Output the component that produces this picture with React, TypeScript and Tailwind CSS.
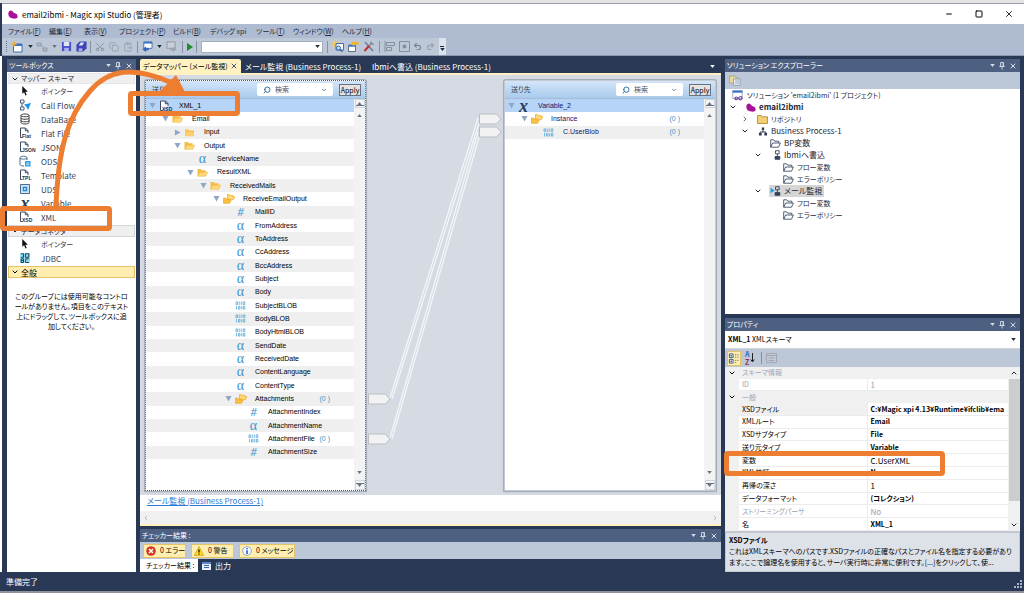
import type { ReactNode } from 'react';
import { Search, X, Minus, Square, ChevronDown, ChevronRight, ChevronUp, ChevronLeft, Scissors, Copy, ClipboardPaste, Undo2, Redo2 } from 'lucide-react';

type NodeIcon = 'xsd' | 'folder' | 'open' | 'multi' | 'alpha' | 'hash' | 'blob' | 'var';

interface MapNode {
    label: string;
    level: number;
    icon: NodeIcon;
    state?: 'open' | 'closed';
    count?: boolean;
}

const sourceNodes: MapNode[] = [
    { label: 'XML_1', level: 0, icon: 'xsd', state: 'open' },
    { label: 'Email', level: 1, icon: 'open', state: 'open' },
    { label: 'Input', level: 2, icon: 'folder', state: 'closed' },
    { label: 'Output', level: 2, icon: 'open', state: 'open' },
    { label: 'ServiceName', level: 3, icon: 'alpha' },
    { label: 'ResultXML', level: 3, icon: 'open', state: 'open' },
    { label: 'ReceivedMails', level: 4, icon: 'open', state: 'open' },
    { label: 'ReceiveEmailOutput', level: 5, icon: 'multi', state: 'open' },
    { label: 'MailID', level: 6, icon: 'hash' },
    { label: 'FromAddress', level: 6, icon: 'alpha' },
    { label: 'ToAddress', level: 6, icon: 'alpha' },
    { label: 'CcAddress', level: 6, icon: 'alpha' },
    { label: 'BccAddress', level: 6, icon: 'alpha' },
    { label: 'Subject', level: 6, icon: 'alpha' },
    { label: 'Body', level: 6, icon: 'alpha' },
    { label: 'SubjectBLOB', level: 6, icon: 'blob' },
    { label: 'BodyBLOB', level: 6, icon: 'blob' },
    { label: 'BodyHtmlBLOB', level: 6, icon: 'blob' },
    { label: 'SendDate', level: 6, icon: 'alpha' },
    { label: 'ReceivedDate', level: 6, icon: 'alpha' },
    { label: 'ContentLanguage', level: 6, icon: 'alpha' },
    { label: 'ContentType', level: 6, icon: 'alpha' },
    { label: 'Attachments', level: 6, icon: 'multi', state: 'open', count: true },
    { label: 'AttachmentIndex', level: 7, icon: 'hash' },
    { label: 'AttachmentName', level: 7, icon: 'alpha' },
    { label: 'AttachmentFile', level: 7, icon: 'blob', count: true },
    { label: 'AttachmentSize', level: 7, icon: 'hash' },
];

const targetNodes: MapNode[] = [
    { label: 'Variable_2', level: 0, icon: 'var', state: 'open' },
    { label: 'Instance', level: 1, icon: 'multi', state: 'open', count: true },
    { label: 'C.UserBlob', level: 2, icon: 'blob', count: true },
];

const menus = [
    { label: 'ファイル', key: 'F', width: 'w-[41px]' },
    { label: '編集', key: 'E', width: 'w-[35px]' },
    { label: '表示', key: 'V', width: 'w-[35px]' },
    { label: 'プロジェクト', key: 'P', width: 'w-[54px]' },
    { label: 'ビルド', key: 'B', width: 'w-[37px]' },
    { label: 'デバッグ xpi', key: '', width: 'w-[46px]' },
    { label: 'ツール', key: 'T', width: 'w-[37px]' },
    { label: 'ウィンドウ', key: 'W', width: 'w-[49px]' },
    { label: 'ヘルプ', key: 'H', width: 'w-[37px]' },
];

const properties = [
    { name: 'スキーマ情報', group: true },
    { name: 'ID', value: '1', muted: true },
    { name: '一般', group: true },
    { name: 'XSDファイル', value: 'C:¥Magic xpi 4.13¥Runtime¥ifclib¥ema', bold: true, selected: true },
    { name: 'XMLルート', value: 'Email', bold: true },
    { name: 'XSDサブタイプ', value: 'File', bold: true },
    { name: '送り元タイプ', value: 'Variable', bold: true },
    { name: '変数', value: 'C.UserXML' },
    { name: 'XML検証', value: 'No', bold: true },
    { name: '再帰の深さ', value: '1' },
    { name: 'データフォーマット', value: '(コレクション)', bold: true },
    { name: 'ストリーミングパーサ', value: 'No', muted: true },
    { name: '名', value: 'XML_1', bold: true },
];

function Caret({ className = 'text-gray-800' }: { className?: string }) {
    return (
        <svg viewBox="0 0 6 4" className={`h-[3px] w-[5px] shrink-0 ${className}`}>
            <path d="M0 0h6L3 4z" fill="currentColor" />
        </svg>
    );
}

function FileIcon({ tag }: { tag: string }) {
    return (
        <svg viewBox="0 0 12 12" className="h-3 w-3 overflow-visible">
            <path d="M1.5 10.5V1h5L9 3.5V6M6.3 1v2.7H9M1.5 10.5h2" fill="#fff" stroke="#3d4b63" strokeWidth="1" />
            <text x="3" y="10.8" fontSize="5" fontWeight="700" fill="#26344d" fontFamily="Liberation Sans">{tag}</text>
        </svg>
    );
}

function OpenFolder() {
    return (
        <svg viewBox="0 0 12 10" className="h-[9px] w-[11px]">
            <path d="M.5 9V1.2h3.6l1 1.3h4.4v2" fill="#f5bd45" />
            <path d="M.6 9.2l2.2-4.6h8.9L9.6 9.2z" fill="#ffd978" stroke="#efb03a" strokeWidth=".6" />
        </svg>
    );
}

function NodeGlyph({ icon }: { icon: NodeIcon }) {
    switch (icon) {
        case 'xsd':
            return <FileIcon tag="XSD" />;
        case 'var':
            return <span className="font-['Liberation_Serif',serif] text-lg leading-3 font-bold italic text-[#2b3b55]">x</span>;
        case 'open':
            return <OpenFolder />;
        case 'folder':
            return (
                <svg viewBox="0 0 12 10" className="h-[9px] w-[11px]">
                    <path d="M1 9.2V1h3.8l1 1.4H11v6.8z" fill="#fbcf69" />
                    <path d="M1 4h10" stroke="#efb544" strokeWidth=".7" />
                </svg>
            );
        case 'multi':
            return (
                <svg viewBox="0 0 12 10" className="h-[10px] w-[12px]">
                    <path d="M4.5 5V.6h2l.7.9h2.6v1.2h2L10.4 5.6H6z" fill="#ffd978" stroke="#f0ae2e" strokeWidth=".8" />
                    <path d="M.5 9.3V4h2l.8 1h3v1.1h1.9L6.6 9.3z" fill="#f9bf45" stroke="#f0a823" strokeWidth=".7" />
                </svg>
            );
        case 'hash':
            return <span className="font-['Open_Sans',sans-serif] text-[11px] leading-3 italic text-[#3d95cc]">#</span>;
        case 'alpha':
            return <span className="font-['Liberation_Serif',serif] text-sm leading-3 text-[#3d95cc]">α</span>;
        case 'blob':
            return (
                <svg viewBox="0 0 12 10" className="h-[9px] w-[11px]">
                    <g fill="none" stroke="#58a7d6" strokeWidth=".9">
                        <path d="M1 1h1.600v3H1zM4.600.6v3.800M6.800.6v3.800M9 1h1.800v3H9zM1.600 5.600v3.800M3.800 6h1.600v3H3.800zM7.400 5.600v3.800M9.200 6h1.600v3H9.200z" />
                    </g>
                </svg>
            );
    }
}

function TreeRow({ node, index, target }: { node: MapNode; index: number; target?: boolean }) {
    const bg = index === 0 ? 'bg-[#b5d4f7]' : index % 2 === 0 ? 'bg-[#efefef]' : 'bg-white';
    return (
        <div className={`relative flex flex-1 items-center ${bg}`} style={{ paddingLeft: Math.round(node.level * 12.7) + 2 }}>
            <span className="flex w-2 shrink-0 justify-center">
                {node.state && (
                    <svg viewBox="0 0 8 8" className={`h-[7px] w-[7px] ${node.state === 'closed' ? '-rotate-90' : ''}`}>
                        <path d="M.5 1h7L4 7.5z" fill="#8ea6c8" />
                    </svg>
                )}
            </span>
            <span className="flex w-[17px] shrink-0 justify-center">
                <NodeGlyph icon={node.icon} />
            </span>
            <span className={`ml-1.5 font-['Liberation_Sans',sans-serif] leading-3 whitespace-nowrap ${target ? 'text-[#14146e]' : 'text-black'}`}>
                {node.label}
            </span>
            {node.count && (
                <span className="absolute right-6 font-['Liberation_Sans',sans-serif] leading-3 text-[#3d95cc]">(0 )</span>
            )}
        </div>
    );
}

function ScrollGutter() {
    return (
        <div className="flex w-[11px] shrink-0 flex-col items-center justify-between bg-[#f3f3f3]">
            <div className="flex flex-col items-center gap-1.5">
                <span className="flex h-[9px] w-[10px] flex-col items-center justify-center border border-gray-300 bg-gray-100">
                    <Caret className="rotate-180 text-gray-500" />
                    <span className="h-px w-2 bg-gray-500" />
                </span>
                <Caret className="rotate-180 text-gray-500" />
            </div>
            <div className="flex flex-col items-center gap-1.5">
                <Caret className="text-gray-500" />
                <span className="flex h-[10px] w-[10px] flex-col items-center justify-center border border-gray-300 bg-gray-100">
                    <span className="h-px w-2 bg-gray-500" />
                    <Caret className="text-gray-500" />
                </span>
            </div>
        </div>
    );
}

function MapperPanel({ title, nodes, target }: { title: string; nodes: MapNode[]; target?: boolean }) {
    return (
        <section
            className={`m-px flex shrink-0 flex-col rounded-t-xs border bg-white shadow ring-1 ring-[#a5adb9] ${target ? 'w-[212px] border-[#c3cad4]' : 'w-[221px] border-dotted border-[#4f5866]'}`}
        >
            <div className="flex h-[18px] shrink-0 items-center gap-1.5 border-b border-[#a9bbd2] bg-linear-to-b from-[#d3e5f8] to-[#a9cbee] pr-1 pl-1.5">
                <span className="flex-1 text-gray-700">{title}</span>
                <label className={`flex h-[13px] items-center gap-1 rounded-xs bg-white px-1.5 ${target ? 'w-[67px]' : 'w-[76px]'}`}>
                    <Search className="h-2 w-2 shrink-0 -scale-x-100 text-[#2f6da8]" strokeWidth={3} />
                    <input type="text" placeholder="検索" aria-label={title + ' 検索'} className="w-full min-w-0 outline-none placeholder:text-gray-600" />
                    <ChevronDown className="h-1.5 w-1.5 shrink-0 text-gray-600" strokeWidth={3} />
                </label>
                <button className="h-3 w-[22px] shrink-0 border border-gray-500 bg-[#e3e3e3] leading-[10px] text-black">Apply</button>
            </div>
            <div className="flex flex-1 bg-white">
                <div className="flex-1">
                    <div className={`flex flex-col ${target ? 'h-[40px]' : 'h-[360px]'}`}>
                        {nodes.map((node, i) => (
                            <TreeRow key={node.label} node={node} index={i} target={target} />
                        ))}
                    </div>
                </div>
                <ScrollGutter />
            </div>
        </section>
    );
}

function PanelHeader({ title }: { title: string }) {
    return (
        <div className="flex h-[13px] shrink-0 items-center justify-between bg-[#4d6082] pr-[3px] pl-0.5 text-white">
            <span className="whitespace-nowrap">{title}</span>
            <div className="flex items-center gap-1 text-[#d5dbe6]">
                <button aria-label="メニュー" className="flex h-2 w-1.5 items-center justify-center"><Caret className="" /></button>
                <button aria-label="固定">
                    <svg viewBox="0 0 6 8" className="h-2 w-1.5">
                        <path d="M1.5.5h3v4h-3zM.3 4.5h5.4M3 4.5v3M4 .5v4" fill="none" stroke="currentColor" strokeWidth=".9" />
                    </svg>
                </button>
                <button aria-label="閉じる"><X className="h-2 w-2" strokeWidth={3} /></button>
            </div>
        </div>
    );
}

function ToolItem({ icon, label, kana }: { icon: ReactNode; label: string; kana?: boolean }) {
    return (
        <button className="flex h-[14px] w-full items-center">
            <span className="ml-3 flex w-3 justify-center">{icon}</span>
            <span className={`ml-[10px] text-gray-700 ${kana ? '' : 'text-[8px]'}`}>{label}</span>
        </button>
    );
}

function Pointer() {
    return (
        <svg viewBox="0 0 8 11" className="h-[10px] w-2">
            <path d="M1 0v8.6l2-1.8 1.5 3.6 1.4-.6-1.5-3.5h2.8z" fill="#111" />
        </svg>
    );
}

function Toolbox() {
    return (
        <aside className="flex w-[129px] shrink-0 flex-col bg-white">
            <PanelHeader title="ツールボックス" />
            <div className="mx-px mt-px flex h-[11px] items-center gap-0.5 border border-gray-200 bg-[#efefef] pl-0.5">
                <ChevronDown className="h-2 w-2" strokeWidth={3} />マッパー スキーマ
            </div>
            <ToolItem icon={<Pointer />} label="ポインター" kana />
            <ToolItem
                icon={
                    <svg viewBox="0 0 12 12" className="h-3 w-3">
                        <path d="M1.500 1h3.500v3H1.500zM3 4v4M1.500 8H5v3H1.500z" fill="none" stroke="#4e5d77" />
                        <path d="M5 5.5L12 4 9 11 7.5 8z" fill="#2196e3" />
                    </svg>
                }
                label="Call Flow"
            />
            <ToolItem
                icon={
                    <svg viewBox="0 0 12 12" className="h-3 w-3">
                        <path d="M2 2.5c0-2 8-2 8 0v7c0 2-8 2-8 0zM2 2.5c0 1.7 8 1.7 8 0M2 5c0 1.7 8 1.7 8 0M2 7.5c0 1.7 8 1.7 8 0" fill="none" stroke="#3c3c3c" />
                    </svg>
                }
                label="DataBase"
            />
            <ToolItem icon={<FileIcon tag="Flat" />} label="Flat File" />
            <ToolItem icon={<FileIcon tag="JSON" />} label="JSON" />
            <ToolItem
                icon={
                    <svg viewBox="0 0 12 12" className="h-3 w-3">
                        <path d="M1 3c0-2.4 7-2.4 7 0v2M1 3v6.500c0 1 2 1.500 4 1.500M1 3c0 1.500 7 1.500 7 0" fill="none" stroke="#4a6a8a" />
                        <path d="M6 6h5.500v5.500H6z" fill="#2e9fe6" />
                        <path d="M7.200 8h3M7.200 9.700h3" stroke="#fff" strokeWidth=".7" />
                    </svg>
                }
                label="ODS"
            />
            <ToolItem icon={<FileIcon tag="TPL" />} label="Template" />
            <ToolItem
                icon={
                    <svg viewBox="0 0 12 12" className="h-3 w-3">
                        <path d="M1.500 1.500h9v9h-9z" fill="#cfe6f7" stroke="#4b6d90" />
                        <path d="M3.700 3.700h4.600v4.600H3.700z" fill="#2589cf" />
                        <path d="M5.200 5.200h1.600v1.600H5.200z" fill="#fff" />
                    </svg>
                }
                label="UDS"
            />
            <ToolItem icon={<NodeGlyph icon="var" />} label="Variable" />
            <ToolItem icon={<FileIcon tag="XSD" />} label="XML" />
            <div className="mx-px mt-px flex h-3 items-center gap-0.5 border border-gray-300 bg-[#efefef] pl-0.5">
                <ChevronDown className="h-2 w-2" strokeWidth={3} />データコネクタ
            </div>
            <ToolItem icon={<Pointer />} label="ポインター" kana />
            <ToolItem
                icon={
                    <svg viewBox="0 0 12 12" className="h-3 w-3">
                        <path d="M1 1h10v10H1z" fill="#9adcf0" />
                        <path d="M2 1.800h2.500v3.500H2M6.500 1.800H9.800v3.500H6.500zM2.200 6.800h2.300v3.700H2.200zM2.200 8.600h2.300M9.800 6.800H6.700v3.700h3.100" fill="none" stroke="#174a5c" />
                    </svg>
                }
                label="JDBC"
            />
            <div className="mx-px mt-px flex h-3 items-center gap-0.5 border border-[#e5c365] bg-[#ffeeb0] pl-0.5 text-[8px] text-black">
                <ChevronDown className="h-2 w-2" strokeWidth={3} />全般
            </div>
            <p className="mt-[13px] text-center leading-[10px] whitespace-nowrap text-black">
                このグループには使用可能なコントロ<br />
                ールがありません。項目をこのテキスト<br />
                上にドラッグして、ツールボックスに追<br />
                加してください。
            </p>
        </aside>
    );
}

function Connectors() {
    return (
        <svg viewBox="0 0 136 413" className="absolute inset-0 h-full w-full">
            <g stroke="#f3f5f8" strokeWidth="1.300" fill="none">
                <path d="M23 319L111 39M25 320L113 41" />
                <path d="M23 359L111 53M25 360L113 55" />
            </g>
            <g fill="#f2f2f2" stroke="#b9bdc4">
                <path d="M1.500 315h17l4.500 5-4.500 5h-17zM1.500 355h17l4.500 5-4.500 5h-17z" />
                <path d="M112.500 35h17l4.500 5-4.500 5h-17zM112.500 48h17l4.500 5-4.500 5h-17z" />
            </g>
        </svg>
    );
}

function Editor() {
    return (
        <main className="flex min-w-0 flex-1 flex-col">
            <div className="flex h-[14px] shrink-0 items-center text-white">
                <button className="flex h-full w-[101px] items-center justify-between rounded-t-xs bg-[#fff1c0] px-[3px] whitespace-nowrap text-black">
                    データマッパー (メール監視)<X className="h-2 w-2 shrink-0 text-gray-600" strokeWidth={3} />
                </button>
                <button className="w-[131px] pl-1 text-left text-[8px] whitespace-nowrap">メール監視 (Business Process-1)</button>
                <button className="text-left text-[8px] whitespace-nowrap">Ibmiへ書込 (Business Process-1)</button>
                <span className="mr-1.5 ml-auto"><Caret className="text-white" /></span>
            </div>
            <div className="flex min-h-0 flex-1 flex-col border-y-2 border-[#fff1c0]">
                <div className="flex flex-1 bg-[#d6dbe3] pt-1 pr-1 pb-[3px] pl-1">
                    <MapperPanel title="送り元" nodes={sourceNodes} />
                    <div className="relative flex-1">
                        <Connectors />
                    </div>
                    <MapperPanel title="送り先" nodes={targetNodes} target />
                </div>
                <div className="h-4 shrink-0 bg-white pl-[7px] text-[8px] leading-3">
                    <a href="#process" className="text-[#2a7ad4] underline">メール監視 (Business Process-1)</a>
                </div>
                <div className="flex h-[13px] shrink-0 items-center justify-between bg-[#f0f0f0] px-0.5 text-gray-400">
                    <ChevronLeft className="h-2 w-2" />
                    <ChevronRight className="h-2 w-2" />
                </div>
            </div>
            <section className="mt-[3px] shrink-0">
                <PanelHeader title="チェッカー結果 :" />
                <div className="flex h-[17px] items-center gap-[5px] bg-[#bcc7d8] pl-[3px] text-black">
                    <button className="flex h-[14px] w-[43px] items-center gap-1 border border-[#e5c365] bg-[#ffeeb0] pl-0.5 whitespace-nowrap">
                        <svg viewBox="0 0 10 10" className="h-[10px] w-[10px] shrink-0">
                            <circle cx="5" cy="5" r="4.800" fill="#cf3a22" />
                            <path d="M3 3l4 4M7 3L3 7" stroke="#fff" strokeWidth="1.500" />
                        </svg>
                        0 エラー
                    </button>
                    <button className="flex h-[14px] w-[43px] items-center gap-1 border border-[#e5c365] bg-[#ffeeb0] pl-0.5 whitespace-nowrap">
                        <svg viewBox="0 0 10 10" className="h-[10px] w-[10px] shrink-0">
                            <path d="M5 .5l4.700 9H.3z" fill="#ffd91a" stroke="#b99507" strokeWidth=".6" />
                            <path d="M5 3.500v3M5 7.500v1" stroke="#000" strokeWidth="1.200" />
                        </svg>
                        0 警告
                    </button>
                    <button className="flex h-[14px] w-[56px] items-center gap-1 border border-[#e5c365] bg-[#ffeeb0] pl-0.5 whitespace-nowrap">
                        <svg viewBox="0 0 10 10" className="h-[10px] w-[10px] shrink-0">
                            <circle cx="5" cy="5" r="4.400" fill="#f4f8ff" stroke="#7f97b8" strokeWidth=".8" />
                            <path d="M5 2v1.200M5 4.200V8" stroke="#1757c2" strokeWidth="1.500" />
                        </svg>
                        0 メッセージ
                    </button>
                </div>
                <div className="flex h-[13px] items-center text-white">
                    <button className="h-full w-[58px] bg-white pl-1.5 text-left whitespace-nowrap text-black">チェッカー結果 :</button>
                    <button className="flex items-center gap-1 pl-1 text-[8px]">
                        <svg viewBox="0 0 9 8" className="h-2 w-[9px]">
                            <path d="M0 0h9v8H0z" fill="#e9f0fb" />
                            <path d="M0 0h9v2H0z" fill="#5d86c9" />
                            <path d="M2 3.500h5M2 5.500h5" stroke="#3d66aa" />
                        </svg>
                        出力
                    </button>
                </div>
            </section>
        </main>
    );
}

function Blob() {
    return (
        <svg viewBox="0 0 10 9" className="h-[9px] w-[10px]">
            <path d="M.3 4C.3 1.500 2 .3 3.600.7 5 1 5.300 2.600 6.800 3.300 8.700 4 9.900 5 9.600 7c-.3 1.700-2.600 1.800-4.600 1.500C2.500 8.200.3 6.800.3 4z" fill="#a8129a" />
        </svg>
    );
}

function LineFolder() {
    return (
        <svg viewBox="0 0 11 9" className="h-[9px] w-[11px]">
            <path d="M.7 8.200V.8h3l1 1.400h4.100V4M.7 8.200l2-4.200h7.700L8.500 8.200z" fill="none" stroke="#3f4f68" strokeWidth=".9" />
        </svg>
    );
}

function FlowIcon({ active }: { active?: boolean }) {
    return (
        <svg viewBox="0 0 12 11" className="h-[10px] w-[12px]">
            {active && <path d="M0 2l4.500 3L0 8z" fill="#1ba1e2" />}
            <path d="M5.500.8h4v3.400h-4zM7.500 4.200v3M5 7.200h5.200v3H5z" fill="none" stroke="#33425c" />
            <path d="M5 7.200h5.200v3H5z" fill="#33425c" />
        </svg>
    );
}

interface SolutionRowProps {
    indent: string;
    icon: ReactNode;
    label: string;
    state?: 'open' | 'closed';
    bold?: boolean;
    selected?: boolean;
    kana?: boolean;
}

function SolutionRow({ indent, icon, label, state, bold, selected, kana }: SolutionRowProps) {
    return (
        <li className={`flex h-3 items-center ${indent}`}>
            <span className="flex w-[15px] shrink-0 items-center">
                {state === 'open' && <ChevronDown className="h-2 w-2" strokeWidth={3} />}
                {state === 'closed' && <ChevronRight className="h-2 w-2 text-gray-500" strokeWidth={3} />}
            </span>
            <span className={`flex items-center whitespace-nowrap ${selected ? 'bg-[#d6d6d6] pr-0.5' : ''}`}>
                <span className="flex w-[13px] justify-center">{icon}</span>
                <span className={`ml-0.5 leading-3 ${bold ? 'font-bold' : ''} ${kana ? '' : 'text-[8px]'}`}>{label}</span>
            </span>
        </li>
    );
}

function SolutionExplorer() {
    return (
        <section className="flex min-h-0 flex-1 flex-col bg-white">
            <PanelHeader title="ソリューション エクスプローラー" />
            <div className="flex h-[17px] shrink-0 items-center bg-[#bcc7d8] pl-1">
                <button aria-label="プロパティ">
                    <svg viewBox="0 0 12 11" className="h-[11px] w-3">
                        <path d="M.5 1h5l1 1.300h2V8h-8z" fill="#e9d9a0" stroke="#a39a77" strokeWidth=".7" />
                        <path d="M4.500 4h6.500v6.300H4.500z" fill="#eef1f6" stroke="#8391a8" strokeWidth=".8" />
                        <path d="M6 6h4M6 8h4" stroke="#8391a8" strokeWidth=".8" />
                    </svg>
                </button>
            </div>
            <ul className="text-gray-800">
                <li className="flex h-3 items-center gap-1 pl-[7px] whitespace-nowrap">
                    <svg viewBox="0 0 11 11" className="h-[11px] w-[11px]">
                        <path d="M.8.800h9.400v7.700H.8z" fill="#fff" stroke="#8ba0c0" strokeWidth=".8" />
                        <path d="M.5.500h10v2.200H.5z" fill="#3a76c8" />
                        <path d="M3 8.500c0-2 2-2 3.500 0s3.500 1.500 3.500-.5-2-2-3.500 0-3.500 2.200-3.500.5z" fill="none" stroke="#6c3f9b" strokeWidth="1.200" />
                    </svg>
                    ソリューション 'email2ibmi' (1 プロジェクト)
                </li>
                <SolutionRow indent="pl-1" icon={<Blob />} label="email2ibmi" state="open" bold />
                <SolutionRow
                    indent="pl-4"
                    icon={
                        <svg viewBox="0 0 11 9" className="h-[9px] w-[11px]">
                            <path d="M.5 8.500V.500h3.800l1 1.300h5.200v6.700z" fill="#f3cf72" stroke="#a9812a" strokeWidth=".8" />
                        </svg>
                    }
                    label="リポジトリ"
                    state="closed"
                    kana
                />
                <SolutionRow
                    indent="pl-4"
                    icon={
                        <svg viewBox="0 0 10 10" className="h-[9px] w-[10px]">
                            <path d="M5 3v3M2 7V5.500h6V7" fill="none" stroke="#2c3b55" />
                            <path d="M3.700.500h2.600v2.800H3.700zM.5 6.500h3v3h-3zM6.500 6.500h3v3h-3z" fill="#2c3b55" />
                        </svg>
                    }
                    label="Business Process-1"
                    state="open"
                />
                <SolutionRow indent="pl-[29px]" icon={<LineFolder />} label="BP変数" />
                <SolutionRow indent="pl-[29px]" icon={<FlowIcon />} label="Ibmiへ書込" state="open" />
                <SolutionRow indent="pl-[42px]" icon={<LineFolder />} label="フロー変数" kana />
                <SolutionRow indent="pl-[42px]" icon={<LineFolder />} label="エラーポリシー" kana />
                <SolutionRow indent="pl-[29px]" icon={<FlowIcon active />} label="メール監視" state="open" selected />
                <SolutionRow indent="pl-[42px]" icon={<LineFolder />} label="フロー変数" kana />
                <SolutionRow indent="pl-[42px]" icon={<LineFolder />} label="エラーポリシー" kana />
            </ul>
        </section>
    );
}

function Properties() {
    return (
        <section className="flex shrink-0 flex-col bg-[#f0f0f0]">
            <PanelHeader title="プロパティ" />
            <button className="flex h-[18px] items-center justify-between border-b border-gray-300 bg-white pr-1 pl-[3px] text-black">
                <span><b>XML_1</b> XMLスキーマ</span>
                <Caret />
            </button>
            <div className="flex h-[18px] items-center gap-1 bg-[#bcc7d8] pl-0.5">
                <button aria-label="項目別" className="flex h-[15px] w-[14px] items-center justify-center border border-[#e5c365] bg-[#ffeeb0]">
                    <svg viewBox="0 0 12 12" className="h-[11px] w-3">
                        <path d="M1 1h4v4H1zM1 7h4v4H1z" fill="#fff" stroke="#35537e" />
                        <path d="M2 3h2M2 9h2M3 2v2M3 8v2M7 2h1.500M9.500 2H11M7 4.500h1.500M9.500 4.500H11M7 8h1.500M9.500 8H11M7 10.500h1.500" stroke="#35537e" strokeWidth=".8" />
                    </svg>
                </button>
                <button aria-label="アルファベット順" className="flex items-center">
                    <span className="flex flex-col text-[7px] leading-[8px] font-bold">
                        <span className="text-[#3563b5]">A</span>
                        <span className="text-[#9c2f45]">Z</span>
                    </span>
                    <svg viewBox="0 0 5 10" className="h-[10px] w-[5px]"><path d="M2.500 0v8M.8 6.500l1.700 2.500 1.700-2.500" fill="none" stroke="#222" /></svg>
                </button>
                <span className="ml-0.5 h-3 w-px bg-[#8591a2]" />
                <svg viewBox="0 0 11 10" className="h-[10px] w-[11px]">
                    <path d="M.5.500h10v9H.5z" fill="#c5cad2" stroke="#a0a7b2" />
                    <path d="M.5 2.500h10M2.500 5h6M2.500 7.500h6" stroke="#a0a7b2" />
                </svg>
            </div>
            <div className="flex h-[164px] overflow-hidden">
                <div className="min-w-0 flex-1">
                    <table className="h-full w-full table-fixed border-collapse">
                        <colgroup>
                            <col className="w-[14px]" />
                            <col className="w-[128px]" />
                            <col />
                        </colgroup>
                        <tbody>
                            {properties.map(p => (
                                <tr key={p.name} className={p.group ? 'text-[#9aa7bb]' : p.muted ? 'text-gray-400' : 'text-black'}>
                                    <td className="bg-[#f0f0f0] p-0 pl-0.5">
                                        {p.group && <ChevronDown className="ml-px h-2 w-2 text-black" strokeWidth={3} />}
                                    </td>
                                    {p.group ? (
                                        <td colSpan={2} className="bg-[#f0f0f0] p-0 pl-[3px] leading-[11px]">{p.name}</td>
                                    ) : (
                                        <>
                                            <td className={`border-r border-b border-[#ececec] p-0 pl-[3px] leading-[11px] ${p.selected ? 'bg-[#f0f0f0]' : 'bg-white'}`}>{p.name}</td>
                                            <td className={`border-b border-[#ececec] bg-white p-0 pl-[3px] leading-[11px] whitespace-nowrap ${p.bold ? 'font-bold' : 'text-[8px]'}`}>{p.value}</td>
                                        </>
                                    )}
                                </tr>
                            ))}
                        </tbody>
                    </table>
                </div>
                <div className="flex w-3 shrink-0 flex-col items-center justify-between py-0.5">
                    <ChevronUp className="h-2 w-2 shrink-0" strokeWidth={3} />
                    <span className="mt-0.5 mb-5 w-[11px] flex-1 bg-[#cdcdcd]" />
                    <ChevronDown className="h-2 w-2 shrink-0" strokeWidth={3} />
                </div>
            </div>
            <div className="h-[41px] border border-t-2 border-[#c3c8d0] bg-[#dde1e8] px-[3px] pt-0.5 leading-[11px] whitespace-nowrap text-black">
                <p className="font-bold">XSDファイル</p>
                <p>これはXMLスキーマへのパスです.XSDファイルの正確なパスとファイル名を指定する必要があり</p>
                <p>ます。ここで論理名を使用すると、サーバ実行時に非常に便利です。[...]をクリックして、使...</p>
            </div>
        </section>
    );
}

function Divider() {
    return <span className="h-3 w-px shrink-0 bg-[#8591a2]" />;
}

function Toolbar() {
    return (
        <div className="flex h-[17px] w-[444px] items-center justify-between bg-[#bcc7d8] pl-1">
            <span className="h-[11px] border-l border-dotted border-[#60708c]" />
            <svg viewBox="0 0 13 12" className="h-3 w-[13px]">
                <path d="M2.500 3h8.500v8H2.500z" fill="#fff" stroke="#3b6db3" />
                <path d="M2.500 3h8.500v2H2.500z" fill="#3b76c6" />
                <path d="M3 .500v5M.5 3h5" stroke="#f2b01e" strokeWidth="1.500" />
            </svg>
            <Caret />
            <svg viewBox="0 0 12 12" className="h-3 w-3">
                <path d="M1 2h4v3H1zM7 7h4v3H7zM5 4l3 3" fill="#b4bac4" stroke="#929aa8" />
            </svg>
            <Caret className="text-gray-500" />
            <svg viewBox="0 0 12 12" className="h-[11px] w-[11px]">
                <path d="M1 1h10v10H1z" fill="#4a50c8" />
                <path d="M3 1h6v4.500H3z" fill="#dfe6fb" />
                <path d="M3.500 7.500h5V11h-5z" fill="#a9b3ea" />
            </svg>
            <svg viewBox="0 0 12 12" className="h-[11px] w-[11px]">
                <path d="M4 .5h7.500V8L8 11.500H.5V4z" fill="#3e44b8" />
                <path d="M5 1.500h4L7 5H3z" fill="#dfe6fb" />
                <path d="M3 8h4v3H3z" fill="#a9b3ea" />
            </svg>
            <Divider />
            <Scissors className="h-[10px] w-[10px] -rotate-90 text-[#858d9b]" />
            <Copy className="h-[10px] w-[10px] text-[#959ca8]" />
            <ClipboardPaste className="h-[10px] w-[10px] text-[#959ca8]" />
            <Divider />
            <svg viewBox="0 0 12 12" className="h-[11px] w-3">
                <path d="M2.500 1h9v7h-9z" fill="#fff" stroke="#3b6db3" />
                <path d="M2.500 1h9v1.800h-9z" fill="#3b76c6" />
                <path d="M5 6L1 9l4 3V10h3V8H5z" fill="#2f62b8" />
            </svg>
            <Caret />
            <svg viewBox="0 0 12 12" className="h-[11px] w-3">
                <path d="M.5 1h9v7h-9z" fill="#c9ced7" stroke="#8f97a5" />
                <path d="M7 6l4 3-4 3V10H4V8h3z" fill="#9aa2af" />
            </svg>
            <Divider />
            <svg viewBox="0 0 6 8" className="h-2 w-1.5"><path d="M0 0l6 4-6 4z" fill="#1f8a2d" /></svg>
            <Divider />
            <button aria-label="検索" className="flex h-3 w-[122px] items-center justify-end border border-[#a3afc1] bg-white pr-0.5">
                <Caret />
            </button>
            <Divider />
            <svg viewBox="0 0 12 11" className="h-[11px] w-3">
                <path d="M.5.500h5l1 1H8v4.500H.5z" fill="#f3cb5b" />
                <path d="M4 2.500h7.500V9H4z" fill="#fff" stroke="#3b6db3" />
                <circle cx="6.500" cy="7" r="2" fill="#cfe3fa" stroke="#3064ad" />
                <path d="M8 8.500l2.500 2.300" stroke="#3064ad" strokeWidth="1.300" />
            </svg>
            <svg viewBox="0 0 12 11" className="h-[11px] w-3">
                <path d="M1.500 4h7v6.500h-7z" fill="#fff" stroke="#66707f" />
                <path d="M1.500 4h7v1.800h-7z" fill="#4a78bb" />
                <path d="M4 .800h7.500v3H8L6 5z" fill="#efb52e" />
            </svg>
            <svg viewBox="0 0 12 11" className="h-[11px] w-3">
                <path d="M2 1l8 9" stroke="#6c7a90" strokeWidth="1.500" />
                <path d="M6 5L1.500 10" stroke="#c92a2a" strokeWidth="2" />
                <path d="M6 5l3-3M8 .500v2.500h3" fill="none" stroke="#727d8d" strokeWidth="1.200" />
            </svg>
            <Divider />
            <svg viewBox="0 0 11 11" className="h-[11px] w-[11px]">
                <path d="M1 0v11M2.500 1.500h8v3h-8zM2.500 6.500h5v3h-5z" fill="none" stroke="#868e9b" />
            </svg>
            <svg viewBox="0 0 11 11" className="h-[11px] w-[11px]">
                <path d="M.5.500h10v10H.5z" fill="none" stroke="#868e9b" />
                <circle cx="5.500" cy="5.500" r="2" fill="#868e9b" />
            </svg>
            <Undo2 className="h-[9px] w-[9px] text-[#7d8694]" strokeWidth={3} />
            <Redo2 className="h-[9px] w-[9px] text-[#9aa2ae]" strokeWidth={3} />
            <button aria-label="オプション" className="flex h-full w-[7px] flex-col items-center justify-end gap-px bg-[#dce2ec] pb-1">
                <span className="h-px w-1 bg-gray-800" />
                <Caret />
            </button>
        </div>
    );
}

export default function App() {
    return (
        <div
            lang="ja"
            className="relative flex min-h-screen flex-col overflow-hidden border-t-[3px] border-b-2 border-t-[#e4e4e4] border-b-[#8d929b] bg-[#293955] font-['Noto_Sans_CJK_JP',sans-serif] text-[7px] leading-[11px] text-gray-800 [font-feature-settings:'palt']"
        >
            <header className="ml-0.5 shrink-0">
                <div className="flex h-[21px] items-center border-t border-gray-400 bg-white pl-1.5 text-black">
                    <Blob />
                    <h1 className="ml-1 flex-1 text-[8px]">email2ibmi - Magic xpi Studio (管理者)</h1>
                    <button aria-label="最小化" className="w-[30px]"><Minus className="mx-auto h-2 w-2" strokeWidth={3} /></button>
                    <button aria-label="最大化" className="w-[30px]"><Square className="mx-auto h-2 w-2" strokeWidth={3} /></button>
                    <button aria-label="閉じる" className="w-[30px]"><X className="mx-auto h-[10px] w-[10px]" strokeWidth={2} /></button>
                </div>
                <nav className="flex h-[14px] items-center bg-[#aebbd0] pl-1.5">
                    {menus.map(m => (
                        <button key={m.label} className={`text-left whitespace-nowrap ${m.width}`}>
                            {m.label}
                            {m.key && <>(<u>{m.key}</u>)</>}
                        </button>
                    ))}
                </nav>
                <div className="border-b border-[#8b99b0] bg-[#aebbd0]">
                    <Toolbar />
                </div>
            </header>

            <div className="flex min-h-0 flex-1 border-l-2 border-white pt-[3px] pr-1 pl-[5px]">
                <Toolbox />
                <div className="ml-1 flex min-w-0 flex-1">
                    <Editor />
                </div>
                <div className="ml-1 flex w-[295px] shrink-0 flex-col gap-1">
                    <SolutionExplorer />
                    <Properties />
                </div>
            </div>

            <footer className="flex h-[19px] shrink-0 items-center justify-between pr-0.5 pl-1.5 text-[8px] text-white">
                準備完了
                <svg viewBox="0 0 8 8" className="mt-1 h-2 w-2">
                    <path d="M6 0h2v2H6zM3 3h2v2H3zM6 3h2v2H6zM0 6h2v2H0zM3 6h2v2H3zM6 6h2v2H6z" fill="#aab4c5" />
                </svg>
            </footer>

            {/* Drag hint: toolbox item -> source schema, plus the resulting variable */}
            <div className="pointer-events-none absolute top-[203px] left-0 h-[25px] w-[112px] rounded border-[5px] border-[#ed7d31]" />
            <div className="pointer-events-none absolute top-[88px] left-[128px] h-[25px] w-[112px] rounded border-[5px] border-[#ed7d31]" />
            <div className="pointer-events-none absolute right-[79px] bottom-[115px] h-[25px] w-[221px] rounded border-[5px] border-[#ed7d31]" />
            <svg viewBox="0 0 200 210" className="pointer-events-none absolute top-0 left-0 h-[210px] w-[200px]">
                <path d="M56 204C58 150 66 115 90 88C108 67 132 62 172 80" fill="none" stroke="#ed7d31" strokeWidth="5" />
                <path d="M176 72L185 89L160 88Z" fill="#ed7d31" />
            </svg>
        </div>
    );
}
